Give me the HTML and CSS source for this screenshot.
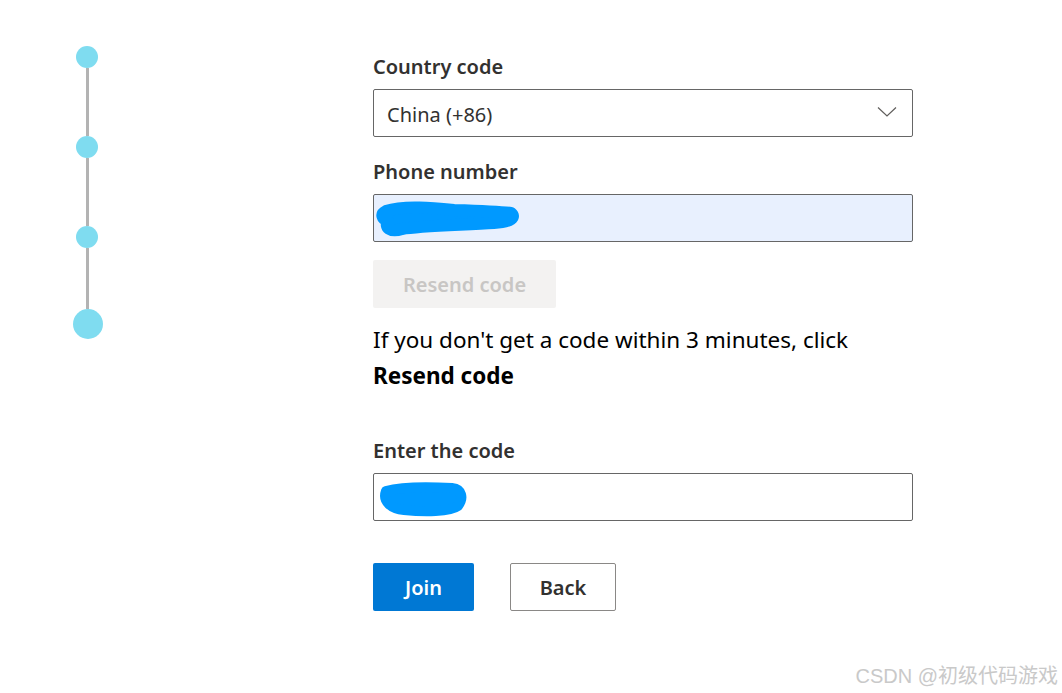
FILE: index.html
```html
<!DOCTYPE html>
<html>
<head>
<meta charset="utf-8">
<link rel="stylesheet" href="styles.css">
</head>
<body>
<div class="page">
  <div class="stepper">
    <div class="dot"></div>
    <div class="seg"></div>
    <div class="dot"></div>
    <div class="seg"></div>
    <div class="dot"></div>
    <div class="seg short"></div>
    <div class="dot big"></div>
  </div>
  <div class="form">
    <div class="label">Country code</div>
    <div class="field select">
      <span class="value">China (+86)</span>
      <svg class="chev" width="20" height="12" viewBox="0 0 20 12"><path d="M1 1.5 L10 10 L19 1.5" fill="none" stroke="#605e5c" stroke-width="1.2"/></svg>
    </div>
    <div class="label gap">Phone number</div>
    <div class="field autofill">
      <svg class="scribble" width="160" height="46" viewBox="0 0 160 46"><path d="M12 16 C 30 10, 60 13, 80 15 C 110 16, 130 17, 137 18 C 142 22, 138 27, 120 28 C 90 30, 45 31, 28 34 C 16 38, 10 32, 14 26 C 8 24, 6 19, 12 16 Z" fill="#0099ff" stroke="#0099ff" stroke-width="12" stroke-linejoin="round" stroke-linecap="round"/></svg>
    </div>
    <div class="resend">Resend code</div>
    <p class="info">If you don't get a code within 3 minutes, click<br><b>Resend code</b></p>
    <div class="label gap2">Enter the code</div>
    <div class="field">
      <svg class="scribble" width="110" height="46" viewBox="0 0 110 46"><path d="M12 17 C 30 12, 60 13, 78 14 C 88 15, 90 24, 84 32 C 76 38, 50 38, 30 36 C 18 35, 8 28, 12 17 Z" fill="#0099ff" stroke="#0099ff" stroke-width="10" stroke-linejoin="round"/></svg>
    </div>
    <div class="actions">
      <button class="btn primary">Join</button>
      <button class="btn secondary">Back</button>
    </div>
  </div>
</div>
<div class="watermark">CSDN @初级代码游戏</div>
</body>
</html>
```
FILE: styles.css
```css
html, body {
  margin: 0;
  padding: 0;
  background: #ffffff;
}
body {
  font-family: "Noto Sans", "Open Sans", "Noto Sans CJK SC", sans-serif;
  width: 1062px;
  height: 693px;
  overflow: hidden;
  position: relative;
}
.page {
  display: flex;
  flex-direction: row;
  align-items: flex-start;
}
.stepper {
  display: flex;
  flex-direction: column;
  align-items: center;
  width: 30px;
  margin-left: 72px;
  margin-top: 46px;
}
.dot {
  width: 22px;
  height: 22px;
  border-radius: 50%;
  background: #7fdcf0;
}
.dot.big {
  width: 30px;
  height: 30px;
  margin-left: 1px;
}
.seg {
  width: 3px;
  height: 68px;
  background: #b3b3b3;
}
.seg.short {
  height: 61px;
}
.form {
  margin-left: 271px;
  margin-top: 53px;
  width: 540px;
  display: flex;
  flex-direction: column;
  align-items: flex-start;
}
.label {
  font-size: 20px;
  font-weight: 600;
  color: #323130;
  line-height: 28px;
  margin-bottom: 8px;
}
.label.gap { margin-top: 21px; }
.label.gap2 { margin-top: 43px; }
.field {
  box-sizing: border-box;
  width: 540px;
  height: 48px;
  border: 1px solid #666666;
  border-radius: 2px;
  background: #fff;
  position: relative;
  display: flex;
  align-items: center;
}
.field.autofill {
  background: #e8f0fe;
}
.select {
  padding: 0 15px 0 13px;
  justify-content: space-between;
}
.value {
  font-size: 20px;
  color: #323130;
  margin-top: 2px;
}
.chev {
  margin-top: -2px;
}
.scribble {
  position: absolute;
  left: 0;
  top: 0;
}
.resend {
  margin-top: 18px;
  width: 183px;
  height: 48px;
  background: #f3f2f1;
  border-radius: 2px;
  color: #c8c6c4;
  font-size: 20px;
  font-weight: 600;
  display: flex;
  align-items: center;
  justify-content: center;
}
.info {
  margin: 14px 0 0 0;
  font-size: 22.5px;
  line-height: 36px;
  color: #000;
}
.info b {
  font-weight: 700;
}
.actions {
  margin-top: 42px;
  display: flex;
  gap: 36px;
}
.btn {
  box-sizing: border-box;
  height: 48px;
  font-family: inherit;
  font-size: 20px;
  font-weight: 600;
  border-radius: 2px;
  padding: 0;
}
.btn.primary {
  width: 101px;
  background: #0078d4;
  color: #ffffff;
  border: none;
}
.btn.secondary {
  width: 106px;
  background: #ffffff;
  color: #323130;
  border: 1px solid #8a8886;
}
.watermark {
  position: absolute;
  right: 4px;
  bottom: 4px;
  font-family: "Liberation Sans", "Noto Sans CJK SC", sans-serif;
  font-size: 20px;
  color: #c9c9c9;
  line-height: 26px;
}
```
